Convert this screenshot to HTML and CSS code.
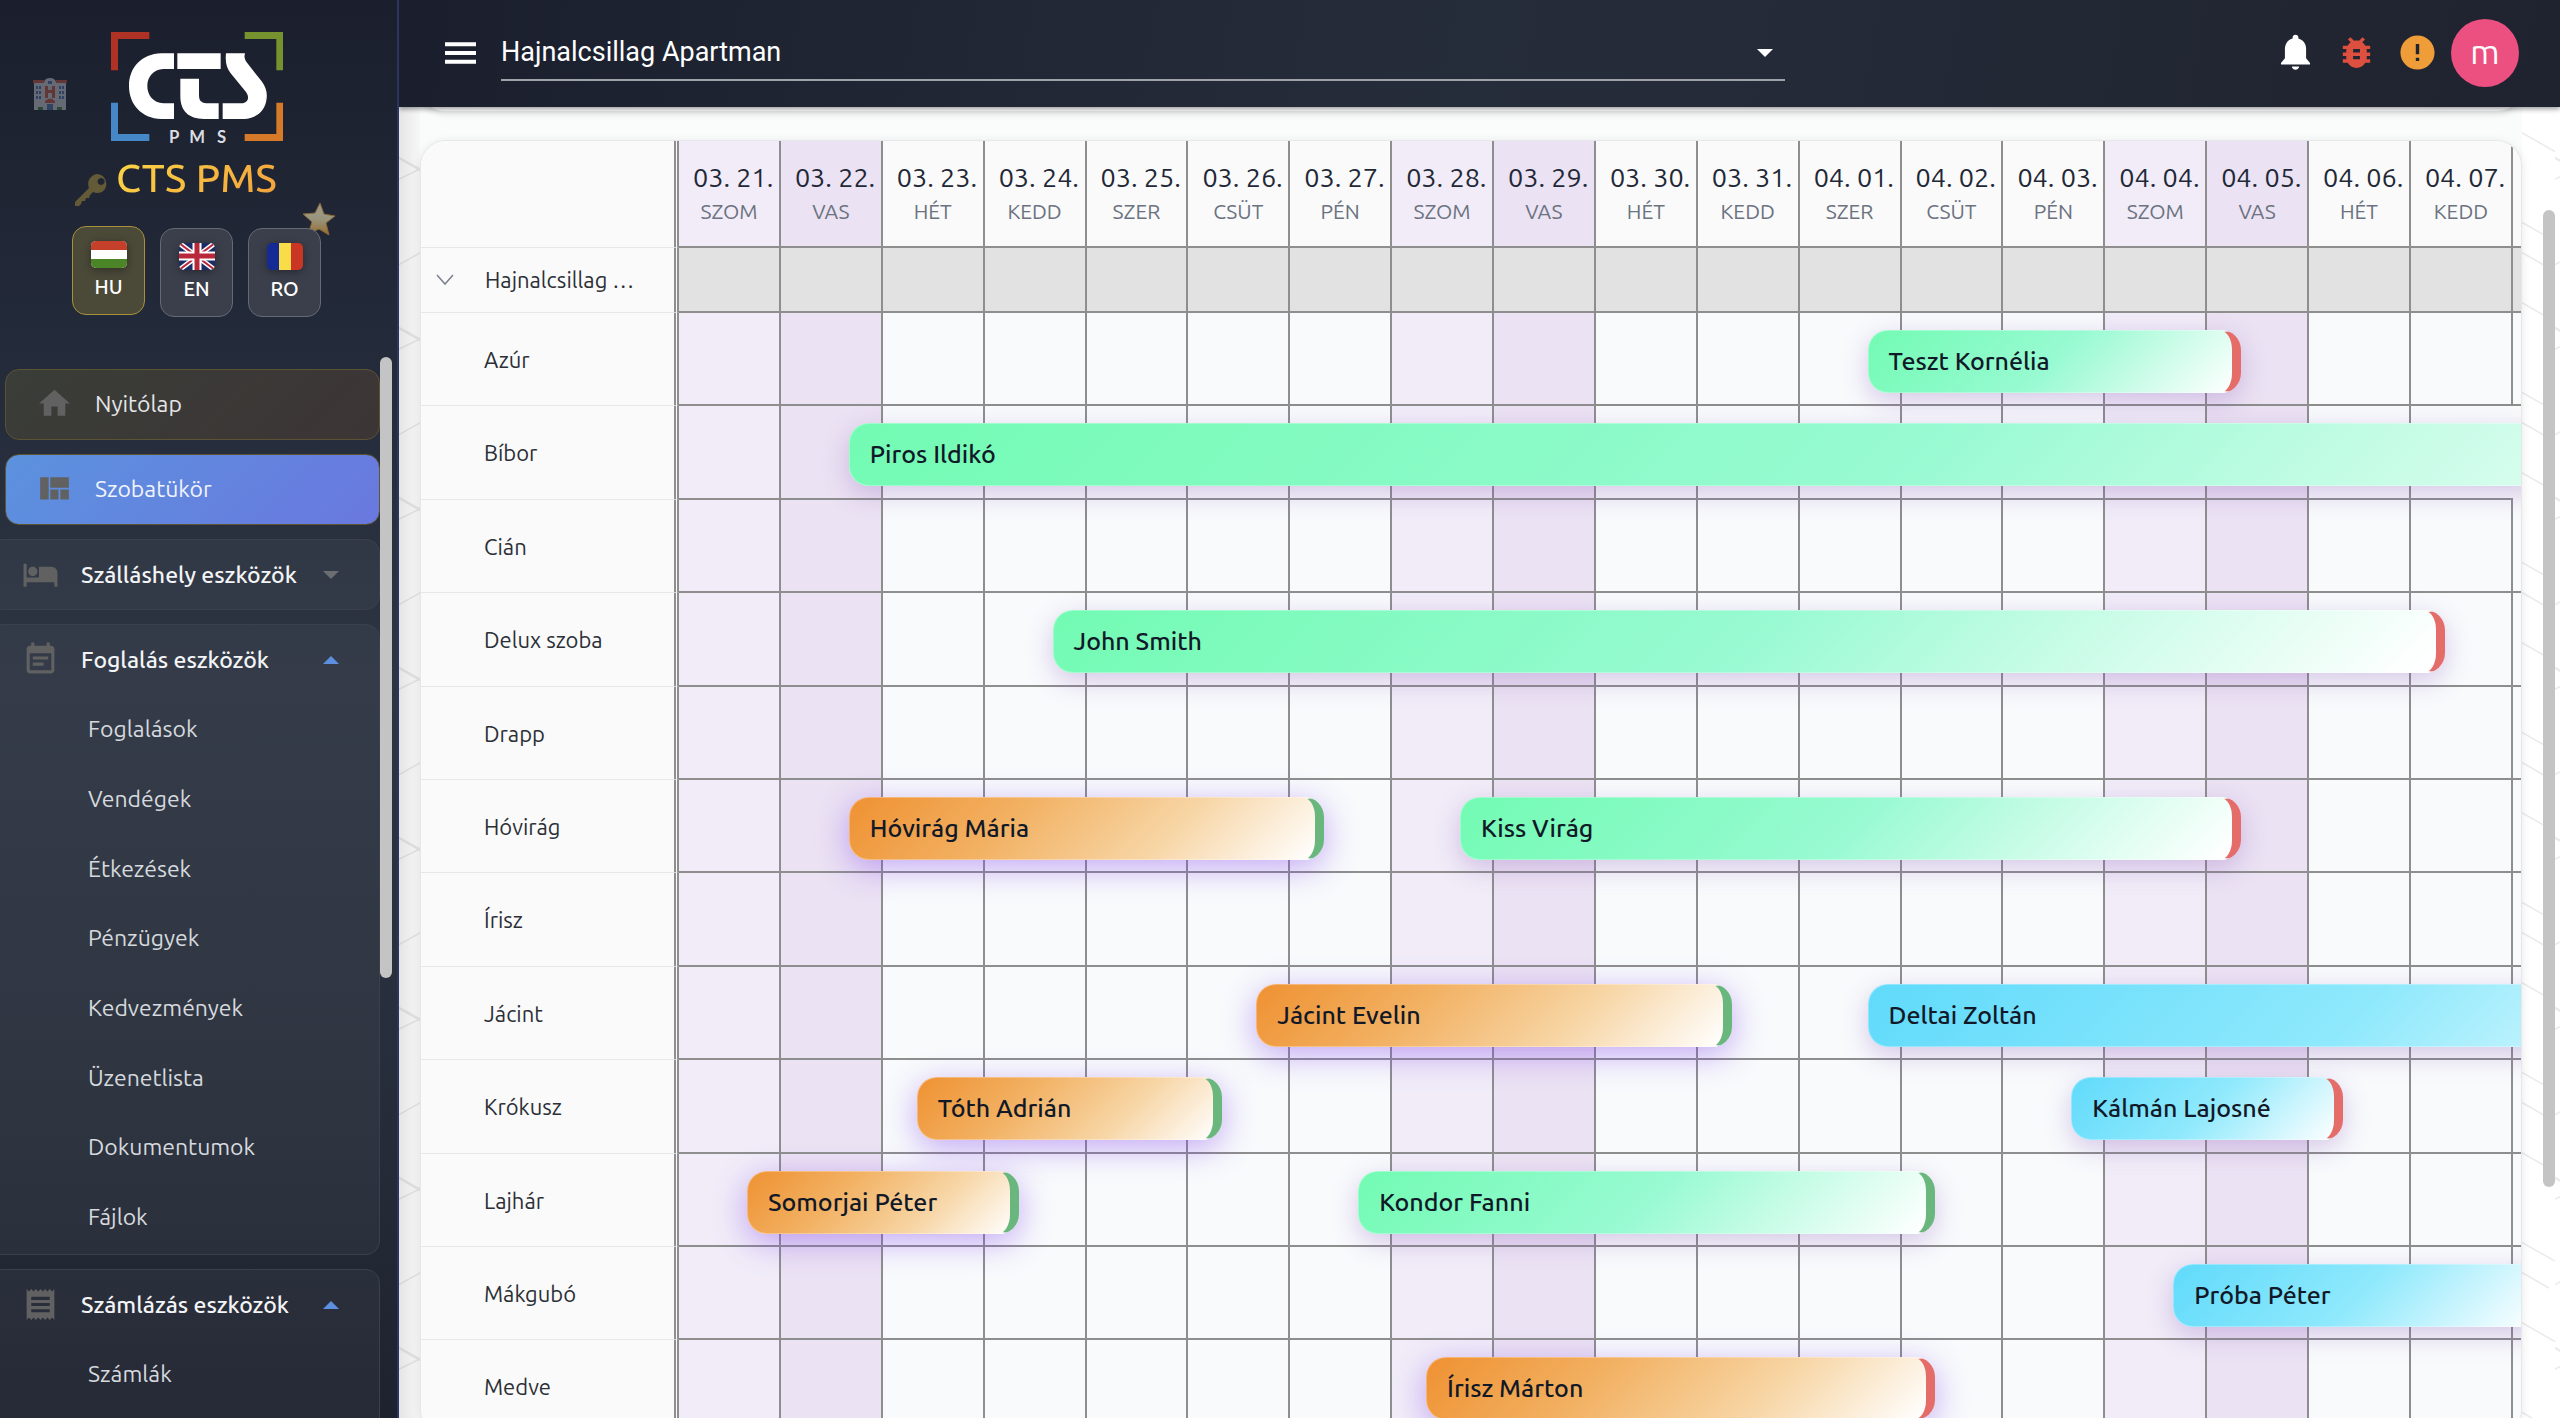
FILE: index.html
```html
<!DOCTYPE html>
<html lang="hu">
<head>
<meta charset="utf-8">
<title>CTS PMS – Szobatükör</title>
<meta name="viewport" content="width=device-width, initial-scale=1">
<link rel="stylesheet" href="styles.css">
</head>
<body>
<div class="app">
  <aside class="sidebar">
    <div class="brand">
      <svg class="deco deco-hotel" viewBox="0 0 34 34" aria-hidden="true">
        <path fill="#c9cdd4" d="M1 5h10q1-4 6-4t6 4h10v28H1z"/>
        <path fill="#c4533f" d="M0 3h11v3H0zM23 3h11v3H23zM12 24q5-5 10 0v2H12z"/>
        <path fill="#4a6fa5" d="M3 9h2v3H3zM6 9h2v3H6zM3 14h2v3H3zM6 14h2v3H6zM3 19h2v3H3zM6 19h2v3H6zM26 9h2v3h-2zM29 9h2v3h-2zM26 14h2v3h-2zM29 14h2v3h-2zM26 19h2v3h-2zM29 19h2v3h-2zM14 27h6v6h-6zM15 4h4v3h-4z"/>
        <path fill="#c4533f" d="M12 9h3v4h4V9h3v12h-3v-5h-4v5h-3z"/>
        <path fill="#3f7a3c" d="M5 30h5v3H5zM24 30h5v3h-5z"/>
      </svg>
      <svg class="deco deco-key" viewBox="0 0 34 34" aria-hidden="true">
        <path fill="#c2a33c" fill-rule="evenodd" d="M24 1a10 10 0 0 1 4 18q-5 2-9 0l-3 3-1 3-3 0-1 3-3 0-1 3-2 2H1v-4l14-14A10 10 0 0 1 24 1zm3 4a3.500 3.500 0 1 0 .1 0z"/>
      </svg>
      <svg class="deco deco-star" viewBox="0 0 34 34" aria-hidden="true">
        <defs><linearGradient id="starFill" x1="0" y1="0" x2="0" y2="1"><stop offset="0" stop-color="#f3ead0"/><stop offset=".5" stop-color="#e9dfae"/><stop offset="1" stop-color="#e79a2c"/></linearGradient></defs>
        <path fill="url(#starFill)" stroke="#d0902e" d="M18 1l4 11 11 2-9 7 3 12-10-6-11 5 4-12-9-8 12-1z"/>
      </svg>
      <svg class="logo" viewBox="333 96 516 336" role="img" aria-label="CTS PMS">
        <path fill="#b03224" d="M333 96h115v21h-94v94h-21z"/>
        <path fill="#76922f" d="M734 96h115v115h-20v-94h-95z"/>
        <path fill="#4687c7" d="M333 308h21v94h94v21H333z"/>
        <path fill="#d67a2a" d="M829 308h20v115H734v-21h95z"/>
        <path fill="#fff" d="M522 160h-38c-60 2-97 43-97 98s37 97 97 99h38v-47h-32c-30-2-48-24-48-52s18-49 48-51h32z"/>
        <path fill="#fff" d="M532 160h130v47H532zM541 236h56v52q0 22 22 22h37v47h-44c-46 0-71-24-71-68z"/>
        <path fill="#fff" d="M678 160h57c-4 14 0 22 12 36l38 48c12 16 17 32 15 50-3 38-30 61-68 63h-64v-47h56c20-1 26-18 14-34l-46-56c-12-15-17-34-14-60z"/>
        <text class="logo-text" x="507 568 651" y="428">PMS</text>
      </svg>
      <h1 class="brand-name">CTS PMS</h1>
      <div class="languages">
        <button type="button" class="language is-active">
          <svg class="flag" viewBox="0 0 36 27" aria-hidden="true"><path fill="#fff" d="M0 0h36v27H0z"/><path fill="#c4402a" d="M0 0h36v9H0z"/><path fill="#4c8528" d="M0 18h36v9H0z"/></svg>
          <span>HU</span>
        </button>
        <button type="button" class="language">
          <svg class="flag" viewBox="0 0 36 27" aria-hidden="true"><path fill="#1a2d66" d="M0 0h36v27H0z"/><path stroke="#fff" stroke-width="5" d="M0 0l36 27M36 0L0 27"/><path stroke="#b8273a" stroke-width="2" d="M0 0l36 27M36 0L0 27"/><path stroke="#fff" stroke-width="9" d="M18 0v27M0 13h36"/><path stroke="#b8273a" stroke-width="5" d="M18 0v27M0 13h36"/></svg>
          <span>EN</span>
        </button>
        <button type="button" class="language">
          <svg class="flag" viewBox="0 0 36 27" aria-hidden="true"><path fill="#142a94" d="M0 0h12v27H0z"/><path fill="#f8dc48" d="M12 0h12v27H12z"/><path fill="#cb3524" d="M24 0h12v27H24z"/></svg>
          <span>RO</span>
        </button>
      </div>
    </div>
    <nav class="nav" aria-label="Főmenü">
      <a class="nav-link" href="#nyitolap">
        <svg class="nav-icon" viewBox="0 0 24 24" aria-hidden="true"><path d="M10 20v-6h4v6h5v-8h3L12 3 2 12h3v8z"/></svg>
        Nyitólap
      </a>
      <a class="nav-link is-current" href="#szobatukor" aria-current="page">
        <svg class="nav-icon" viewBox="0 0 24 24" aria-hidden="true"><path d="M2.700 4.700H8.200V19.200H2.700zM9.300 4.700h12v6.800h-12zM9.300 12.600h5.300v6.600H9.300zM15.800 12.600h5.500v6.600h-5.500z"/></svg>
        Szobatükör
      </a>
      <section class="nav-group">
        <button type="button" class="nav-toggle" aria-expanded="false">
          <svg class="nav-icon" viewBox="0 0 24 24" aria-hidden="true"><path d="M7 13c1.660 0 3-1.340 3-3S8.660 7 7 7s-3 1.340-3 3 1.340 3 3 3zm12-6h-8v7H3V5H1v15h2v-3h18v3h2v-9c0-2.210-1.790-4-4-4z"/></svg>
          <span>Szálláshely eszközök</span>
          <svg class="caret" viewBox="0 0 16 8" aria-hidden="true"><path d="M0 0h16l-8 8z"/></svg>
        </button>
      </section>
      <section class="nav-group">
        <button type="button" class="nav-toggle" aria-expanded="true">
          <svg class="nav-icon" viewBox="0 0 24 24" aria-hidden="true"><path d="M17 10H7v2h10v-2zm2-7h-1V1h-2v2H8V1H6v2H5c-1.110 0-1.990.9-1.990 2L3 19c0 1.100.89 2 2 2h14c1.100 0 2-.9 2-2V5c0-1.100-.9-2-2-2zm0 16H5V8h14v11zm-5-5H7v2h7v-2z"/></svg>
          <span>Foglalás eszközök</span>
          <svg class="caret" viewBox="0 0 16 8" aria-hidden="true"><path d="M0 8h16L8 0z"/></svg>
        </button>
        <ul class="nav-sub">
          <li><a href="#foglalasok">Foglalások</a></li>
          <li><a href="#vendegek">Vendégek</a></li>
          <li><a href="#etkezesek">Étkezések</a></li>
          <li><a href="#penzugyek">Pénzügyek</a></li>
          <li><a href="#kedvezmenyek">Kedvezmények</a></li>
          <li><a href="#uzenetlista">Üzenetlista</a></li>
          <li><a href="#dokumentumok">Dokumentumok</a></li>
          <li><a href="#fajlok">Fájlok</a></li>
        </ul>
      </section>
      <section class="nav-group">
        <button type="button" class="nav-toggle" aria-expanded="true">
          <svg class="nav-icon" viewBox="0 0 24 24" aria-hidden="true"><path d="M18 17H6v-2h12v2zm0-4H6v-2h12v2zm0-4H6V7h12v2zM3 22l1.500-1.500L6 22l1.500-1.500L9 22l1.500-1.500L12 22l1.500-1.500L15 22l1.500-1.500L18 22l1.500-1.500L21 22V2l-1.500 1.500L18 2l-1.500 1.500L15 2l-1.500 1.500L12 2l-1.500 1.500L9 2 7.500 3.500 6 2 4.500 3.500 3 2v20z"/></svg>
          <span>Számlázás eszközök</span>
          <svg class="caret" viewBox="0 0 16 8" aria-hidden="true"><path d="M0 8h16L8 0z"/></svg>
        </button>
        <ul class="nav-sub">
          <li><a href="#szamlak">Számlák</a></li>
        </ul>
      </section>
    </nav>
    <div class="scroll-thumb sidebar-thumb"></div>
  </aside>

  <div class="content">
    <header class="topbar">
      <button type="button" class="icon-button menu-button" aria-label="Menü">
        <svg viewBox="0 0 32 22" aria-hidden="true"><path fill="#fff" d="M0 0h32v4H0zM0 9h32v4H0zM0 18h32v4H0z"/></svg>
      </button>
      <div class="property">
        <select class="property-select" aria-label="Szálláshely">
          <option>Hajnalcsillag Apartman</option>
        </select>
        <svg class="property-caret" viewBox="0 0 16 8" aria-hidden="true"><path fill="#fff" d="M0 0h16l-8 8z"/></svg>
      </div>
      <div class="actions">
        <button type="button" class="icon-button" aria-label="Értesítések">
          <svg class="action-icon" viewBox="0 0 24 24" aria-hidden="true"><path fill="#fff" d="M12 1.600c-1 0-1.700.7-1.700 1.600v.6C7.500 4.600 5.800 7 5.800 9.800v5.500L3.500 18.200v.8h17v-.8l-2.300-2.900V9.800c0-2.800-1.700-5.200-4.500-6v-.6c0-.9-.7-1.600-1.700-1.600zM9.900 20.200c0 1 1 1.900 2.100 1.900s2.100-.9 2.100-1.900z"/></svg>
        </button>
        <button type="button" class="icon-button" aria-label="Hibajelentés">
          <svg class="action-icon" viewBox="0 0 24 24" aria-hidden="true"><path fill="#dd4f3e" d="M20 8h-2.810c-.45-.78-1.070-1.450-1.820-1.960L17 4.410 15.590 3l-2.170 2.170C12.960 5.060 12.490 5 12 5s-.96.060-1.410.17L8.410 3 7 4.410l1.620 1.630C7.880 6.550 7.260 7.220 6.810 8H4v2h2.090c-.05.33-.09.66-.09 1v1H4v2h2v1c0 .34.040.67.090 1H4v2h2.810c1.040 1.790 2.970 3 5.190 3s4.150-1.210 5.190-3H20v-2h-2.090c.05-.33.09-.66.09-1v-1h2v-2h-2v-1c0-.34-.04-.67-.09-1H20V8zm-6 8h-4v-2h4v2zm0-4h-4v-2h4v2z"/></svg>
        </button>
        <button type="button" class="icon-button" aria-label="Figyelmeztetések">
          <svg class="action-icon" viewBox="0 0 24 24" aria-hidden="true"><path fill="#ef9d38" d="M12 2C6.480 2 2 6.480 2 12s4.480 10 10 10 10-4.480 10-10S17.520 2 12 2zm1 15h-2v-2h2v2zm0-4h-2V7h2v6z"/></svg>
        </button>
        <button type="button" class="avatar" aria-label="Fiók">m</button>
      </div>
    </header>

    <main class="page">
      <div class="toolbar-card"></div>
      <div class="planner">
        <table class="planner-table">
          <colgroup><col class="col-room"><col span="18"><col class="col-rest"></colgroup>
          <thead>
            <tr>
              <th class="room"></th>
              <th><b>03. 21.</b><span>SZOM</span></th><th><b>03. 22.</b><span>VAS</span></th><th><b>03. 23.</b><span>HÉT</span></th><th><b>03. 24.</b><span>KEDD</span></th><th><b>03. 25.</b><span>SZER</span></th><th><b>03. 26.</b><span>CSÜT</span></th><th><b>03. 27.</b><span>PÉN</span></th>
              <th><b>03. 28.</b><span>SZOM</span></th><th><b>03. 29.</b><span>VAS</span></th><th><b>03. 30.</b><span>HÉT</span></th><th><b>03. 31.</b><span>KEDD</span></th><th><b>04. 01.</b><span>SZER</span></th><th><b>04. 02.</b><span>CSÜT</span></th><th><b>04. 03.</b><span>PÉN</span></th>
              <th><b>04. 04.</b><span>SZOM</span></th><th><b>04. 05.</b><span>VAS</span></th><th><b>04. 06.</b><span>HÉT</span></th><th><b>04. 07.</b><span>KEDD</span></th><th></th>
            </tr>
            <tr class="group-row">
              <th class="room" scope="row">
                <button type="button" class="group-toggle" aria-expanded="true">
                  <svg class="chevron" viewBox="0 0 18 12" aria-hidden="true"><path fill="none" stroke="#7b818c" stroke-width="1.500" d="M1 1l8 9 8-9"/></svg>
                  <span>Hajnalcsillag Apartman</span>
                </button>
              </th>
              <td></td><td></td><td></td><td></td><td></td><td></td><td></td><td></td><td></td><td></td><td></td><td></td><td></td><td></td><td></td><td></td><td></td><td></td><td></td>
            </tr>
          </thead>
          <tbody>
            <tr><th class="room" scope="row">Azúr</th><td></td><td></td><td></td><td></td><td></td><td></td><td></td><td></td><td></td><td></td><td></td><td><a href="#f1" class="stay is-green ends-red" style="--from:2;--thirds:11">Teszt Kornélia</a></td><td></td><td></td><td></td><td></td><td></td><td></td><td></td></tr>
            <tr><th class="room" scope="row">Bíbor</th><td></td><td><a href="#f2" class="stay is-green ends-red" style="--from:2;--thirds:63">Piros Ildikó</a></td><td></td><td></td><td></td><td></td><td></td><td></td><td></td><td></td><td></td><td></td><td></td><td></td><td></td><td></td><td></td><td></td></tr>
            <tr><th class="room" scope="row">Cián</th><td></td><td></td><td></td><td></td><td></td><td></td><td></td><td></td><td></td><td></td><td></td><td></td><td></td><td></td><td></td><td></td><td></td><td></td><td></td></tr>
            <tr><th class="room" scope="row">Delux szoba</th><td></td><td></td><td></td><td><a href="#f3" class="stay is-green ends-red" style="--from:2;--thirds:41">John Smith</a></td><td></td><td></td><td></td><td></td><td></td><td></td><td></td><td></td><td></td><td></td><td></td><td></td><td></td><td></td><td></td></tr>
            <tr><th class="room" scope="row">Drapp</th><td></td><td></td><td></td><td></td><td></td><td></td><td></td><td></td><td></td><td></td><td></td><td></td><td></td><td></td><td></td><td></td><td></td><td></td><td></td></tr>
            <tr><th class="room" scope="row">Hóvirág</th><td></td><td><a href="#f4" class="stay is-orange ends-green" style="--from:2;--thirds:14">Hóvirág Mária</a></td><td></td><td></td><td></td><td></td><td></td><td><a href="#f5" class="stay is-green ends-red" style="--from:2;--thirds:23">Kiss Virág</a></td><td></td><td></td><td></td><td></td><td></td><td></td><td></td><td></td><td></td><td></td><td></td></tr>
            <tr><th class="room" scope="row">Írisz</th><td></td><td></td><td></td><td></td><td></td><td></td><td></td><td></td><td></td><td></td><td></td><td></td><td></td><td></td><td></td><td></td><td></td><td></td><td></td></tr>
            <tr><th class="room" scope="row">Jácint</th><td></td><td></td><td></td><td></td><td></td><td><a href="#f6" class="stay is-orange ends-green" style="--from:2;--thirds:14">Jácint Evelin</a></td><td></td><td></td><td></td><td></td><td></td><td><a href="#f7" class="stay is-blue ends-red" style="--from:2;--thirds:29">Deltai Zoltán</a></td><td></td><td></td><td></td><td></td><td></td><td></td><td></td></tr>
            <tr><th class="room" scope="row">Krókusz</th><td></td><td></td><td><a href="#f8" class="stay is-orange ends-green" style="--from:1;--thirds:9">Tóth Adrián</a></td><td></td><td></td><td></td><td></td><td></td><td></td><td></td><td></td><td></td><td></td><td><a href="#f9" class="stay is-blue ends-red" style="--from:2;--thirds:8">Kálmán Lajosné</a></td><td></td><td></td><td></td><td></td><td></td></tr>
            <tr><th class="room" scope="row">Lajhár</th><td><a href="#f10" class="stay is-orange ends-green" style="--from:2;--thirds:8">Somorjai Péter</a></td><td></td><td></td><td></td><td></td><td></td><td><a href="#f11" class="stay is-green ends-green" style="--from:2;--thirds:17">Kondor Fanni</a></td><td></td><td></td><td></td><td></td><td></td><td></td><td></td><td></td><td></td><td></td><td></td><td></td></tr>
            <tr><th class="room" scope="row">Mákgubó</th><td></td><td></td><td></td><td></td><td></td><td></td><td></td><td></td><td></td><td></td><td></td><td></td><td></td><td></td><td><a href="#f12" class="stay is-blue ends-red" style="--from:2;--thirds:11">Próba Péter</a></td><td></td><td></td><td></td><td></td></tr>
            <tr><th class="room" scope="row">Medve</th><td></td><td></td><td></td><td></td><td></td><td></td><td></td><td><a href="#f13" class="stay is-orange ends-red" style="--from:1;--thirds:15">Írisz Márton</a></td><td></td><td></td><td></td><td></td><td></td><td></td><td></td><td></td><td></td><td></td><td></td></tr>
          </tbody>
        </table>
      </div>
    </main>
    <div class="scroll-thumb page-thumb"></div>
  </div>
</div>
</body>
</html>
```
FILE: styles.css
```css
*, *::before, *::after { box-sizing: border-box; }

:root {
  --line: #8e8e8e;
  --soft-line: #e5e7eb;
  --font: Ubuntu, "Noto Sans", sans-serif;
}

html, body { height: 100%; }

body {
  margin: 0;
  font-family: var(--font);
  font-size: 22px;
  color: #1f2937;
  overflow: hidden;
}

button { font: inherit; color: inherit; border: 0; padding: 0; background: none; cursor: pointer; }
a { color: inherit; text-decoration: none; }

.app { display: flex; height: 100%; }

/* ---------- Sidebar ---------- */
.sidebar {
  position: relative;
  z-index: 2;
  flex: none;
  width: 399px;
  display: flex;
  flex-direction: column;
  overflow: hidden;
  border-right: 2px solid #2b3560;
  background: linear-gradient(#1b1f2d 0%, #222938 22%, #2d3442 48%, #272e3b 75%, #1e222e 100%);
}

.brand {
  position: relative;
  display: flex;
  flex-direction: column;
  align-items: center;
  padding: 32px 4px 0 0;
}

.logo { width: 172px; height: 112px; display: block; }
.logo-text { font-family: Lato, sans-serif; font-weight: 700; font-size: 50px; fill: #dcdde1; }

.brand-name {
  position: relative;
  margin: 10px 0 26px;
  font-size: 40px;
  line-height: 48px;
  font-weight: 500;
  color: transparent;
  background: linear-gradient(135deg, #fbd646, #f2a03c);
  -webkit-background-clip: text;
  background-clip: text;
}

.deco { position: absolute; width: 34px; height: 34px; }
.deco-hotel { left: 33px; top: 77px; opacity: .42; }
.deco-key { left: 74px; top: 173px; opacity: .42; }
.deco-star { left: 302px; top: 202px; opacity: .6; }

.languages { display: flex; gap: 15px; }

.language {
  position: relative;
  width: 73px;
  height: 89px;
  display: flex;
  flex-direction: column;
  align-items: center;
  gap: 6px;
  padding-top: 14px;
  border: 1px solid #666a74;
  border-radius: 14px;
  background: #3b3f4b;
  color: #fff;
  font-size: 20px;
  line-height: 26px;
  font-weight: 500;
}
.language.is-active { background: #4b4938; border-color: #a8913a; transform: translateY(-2px); }
.flag { width: 36px; height: 27px; border-radius: 5px; filter: drop-shadow(0 2px 4px rgba(0, 0, 0, .35)); }

.nav {
  flex: 1;
  display: flex;
  flex-direction: column;
  gap: 14px;
  margin-top: 40px;
  padding: 12px 17px 0 0;
  overflow: hidden;
}
.nav > * { flex: none; }

.nav-link {
  display: flex;
  align-items: center;
  gap: 22px;
  height: 71px;
  margin-left: 5px;
  padding: 0 0 2px 30px;
  border: 1px solid #5c5333;
  border-radius: 14px;
  background: linear-gradient(135deg, #3a3d38, #3c3535);
  color: #e4e5e7;
  font-size: 23px;
}
.nav-link.is-current { background: linear-gradient(135deg, #5b92de, #6a78df); color: #f0f4fd; }

.nav-icon { flex: none; width: 37px; height: 37px; fill: #616161; }

.nav-group {
  margin-left: -12px;
  border: 1px solid #3a404c;
  border-radius: 14px;
  background: rgba(255, 255, 255, .04);
}
/* The last group runs on below the fold of the menu */
.nav-group:last-child { flex: 1 0 auto; margin-bottom: -20px; }

.nav-toggle {
  width: 100%;
  height: 69px;
  display: grid;
  grid-template-columns: 37px 1fr 16px;
  align-items: center;
  column-gap: 22px;
  padding: 0 40px 0 33px;
  text-align: left;
  color: #f3f4f6;
  font-size: 23px;
  font-weight: 500;
  white-space: nowrap;
}
.caret { width: 16px; height: 8px; fill: #6b6d70; }
.nav-toggle[aria-expanded="true"] .caret { fill: #5c8fe0; }

.nav-sub { list-style: none; margin: 0; padding: 0 0 2px; }
.nav-sub a { display: block; padding-left: 99px; line-height: 70px; color: #d6d9de; font-size: 23px; }
.nav-sub li:nth-child(3n) a { line-height: 69px; }

.scroll-thumb { position: absolute; width: 12px; border-radius: 6px; background: #c4c4c4; }
.sidebar-thumb { right: 5px; top: 357px; height: 621px; }
.page-thumb { right: 5px; top: 210px; height: 977px; }

/* ---------- Top bar ---------- */
.content { position: relative; flex: 1; min-width: 0; display: flex; flex-direction: column; }

.topbar {
  position: relative;
  z-index: 1;
  flex: none;
  height: 107px;
  display: flex;
  align-items: center;
  padding: 0 41px 2px 46px;
  background: linear-gradient(100deg, #1b1f2d, #262d3a 50%, #1f232f);
  box-shadow: 0 2px 5px rgba(0, 0, 0, .4);
}

.menu-button svg { display: block; width: 31px; height: 22px; }

.property { position: relative; flex: 0 1 1284px; margin-left: 25px; }
.property-select {
  appearance: none;
  display: block;
  width: 100%;
  height: 56px;
  padding: 0;
  border: 0;
  border-bottom: 2px solid #9fa2a8;
  border-radius: 0;
  background: none;
  color: #fff;
  font-family: Roboto, sans-serif;
  font-size: 27px;
}
.property-caret { position: absolute; right: 12px; top: 24px; width: 16px; height: 8px; pointer-events: none; }

.actions { display: flex; align-items: center; gap: 20px; margin-left: auto; }
.action-icon { display: block; width: 41px; height: 41px; }
.avatar {
  width: 68px;
  height: 68px;
  margin-left: -7px;
  border-radius: 50%;
  background: #ec5080;
  color: #fff;
  font-size: 34px;
  line-height: 64px;
  padding-bottom: 3px;
}

/* ---------- Planner ---------- */
.page {
  flex: 1;
  min-height: 0;
  display: flex;
  flex-direction: column;
  gap: 28px;
  padding: 0 38px 0 21px;
  overflow: hidden;
  background:
    linear-gradient(#fafbfb, #fafbfb) 21px 0 / calc(100% - 59px) 90px no-repeat,
    linear-gradient(90deg, rgba(0, 0, 0, .1), transparent 30px),
    url("data:image/svg+xml,%3Csvg xmlns='http://www.w3.org/2000/svg' width='98' height='170'%3E%3Cpath fill='none' stroke='%23ebebeb' stroke-width='1.500' d='M-6 44L43 72V129L92 157M104 44L55 16M-6 71L21 58L-6 43M-6 157L55 123M98 130L43 99'/%3E%3C/svg%3E") 0 4px,
    #fff;
}
.page > * { flex: none; }

.toolbar-card {
  height: 65px;
  margin-top: -60px;
  border: 1px solid var(--soft-line);
  border-radius: 24px;
  background: #fff;
  box-shadow: 0 2px 6px rgba(0, 0, 0, .12);
}

.planner {
  border: 1px solid var(--soft-line);
  border-radius: 26px;
  overflow: hidden;
  background: #fafafa;
  box-shadow: 0 2px 10px rgba(0, 0, 0, .1);
}

.planner-table {
  width: 100%;
  table-layout: fixed;
  border-collapse: separate;
  border-spacing: 0;
}
.col-room { width: 258px; }
.col-rest { width: 8px; }

.planner-table th, .planner-table td { padding: 0; font-weight: 400; }

/* Grid lines are painted as backgrounds so a stay's width is a plain multiple of its cell */
.planner-table td, .planner-table th:not(.room) {
  position: relative;
  background:
    linear-gradient(var(--line), var(--line)) right / 2px 100% no-repeat,
    linear-gradient(var(--line), var(--line)) bottom / 100% 2px no-repeat,
    var(--cell, #f8fafc);
}
.planner-table tr > :last-child:not(.room) {
  background: linear-gradient(var(--line), var(--line)) bottom / 100% 2px no-repeat, var(--cell, #f8fafc);
}
.planner-table thead tr { --cell: #fafafa; height: 107px; }
.planner-table tr > :nth-child(7n + 2) { --cell: #f1ecf8; }
.planner-table tr > :nth-child(7n + 3) { --cell: #ebe2f3; }
.planner-table thead .group-row { height: 65px; }
.planner-table .group-row td { --cell: #e2e2e2; }

.planner-table tbody tr { height: 93px; }
.planner-table tbody tr:nth-child(5n + 2),
.planner-table tbody tr:nth-child(5n + 4) { height: 94px; }

.planner-table thead th:not(.room) { padding-bottom: 4px; }
.planner-table thead b {
  display: block;
  padding-left: 14px;
  text-align: left;
  font-size: 27px;
  line-height: 36px;
  font-weight: 400;
  white-space: nowrap;
}
.planner-table thead span { display: block; padding-right: 2px; line-height: 32px; font-size: 21px; color: #6b7280; }

.planner-table .room {
  padding-left: 63px;
  text-align: left;
  background: #fafafa;
  color: #2b2f36;
  border-bottom: 1px solid var(--soft-line);
  border-right: 5px double var(--line);
}
.planner-table .group-row .room { padding: 0 30px 0 15px; }

.group-toggle { width: 100%; display: flex; align-items: center; gap: 31px; }
.chevron { flex: none; width: 18px; height: 12px; }
.planner-table .group-toggle span {
  padding: 0;
  color: #2b2f36;
  font-size: 22px;
  overflow: hidden;
  text-overflow: ellipsis;
  white-space: nowrap;
}

.stay {
  position: absolute;
  z-index: 1;
  top: 17px;
  left: calc(var(--from) * 100% / 3);
  width: calc(var(--thirds) * 100% / 3);
  height: 63px;
  padding-left: 20px;
  line-height: 61px;
  overflow: hidden;
  white-space: nowrap;
  font-size: 25px;
  font-weight: 500;
  color: #111827;
  border: 1px solid rgba(255, 255, 255, .3);
  border-right-width: 9px;
  border-radius: 20px;
  background-origin: border-box;
  box-shadow: 0 8px 26px rgba(126, 72, 180, .28);
}
.is-green { background-image: linear-gradient(135deg, #72fbb3, #98fad2 50%, #fff 98%); }
.is-orange {
  background-image: linear-gradient(135deg, #ef9132, #f2b061 33%, #f7d5a4 66%, #fff 98%);
  box-shadow: 0 8px 32px rgba(124, 58, 237, .42);
}
.is-blue { background-image: linear-gradient(135deg, #60dafb, #8fe9fc 50%, #fff 98%); }
.ends-red { border-right-color: #e46d6a; }
.ends-green { border-right-color: #69b77d; }
```
